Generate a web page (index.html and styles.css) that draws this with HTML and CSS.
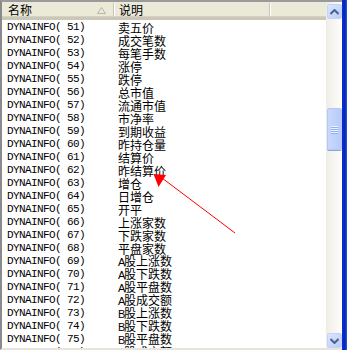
FILE: index.html
```html
<!DOCTYPE html>
<html>
<head>
<meta charset="utf-8">
<link rel="stylesheet" href="styles.css">
</head>
<body>
<div class="frame">
  <div class="panel">
    <div class="list">
      <div class="header">
        <div class="hcell c1"><span>名称</span>
          <svg class="sort" width="9" height="7" viewBox="0 0 9 7"><path d="M4.5 0.5 L8.5 6.5 L0.5 6.5 Z" fill="none" stroke="#b8b5a8" stroke-width="1"/></svg>
        </div>
        <div class="hcell c2"><span>说明</span></div>
        <div class="hcell c3"></div>
      </div>
      <div class="rows">
        <div class="row"><span class="name">DYNAINFO( 51)</span><span class="desc">卖五价</span></div>
        <div class="row"><span class="name">DYNAINFO( 52)</span><span class="desc">成交笔数</span></div>
        <div class="row"><span class="name">DYNAINFO( 53)</span><span class="desc">每笔手数</span></div>
        <div class="row"><span class="name">DYNAINFO( 54)</span><span class="desc">涨停</span></div>
        <div class="row"><span class="name">DYNAINFO( 55)</span><span class="desc">跌停</span></div>
        <div class="row"><span class="name">DYNAINFO( 56)</span><span class="desc">总市值</span></div>
        <div class="row"><span class="name">DYNAINFO( 57)</span><span class="desc">流通市值</span></div>
        <div class="row"><span class="name">DYNAINFO( 58)</span><span class="desc">市净率</span></div>
        <div class="row"><span class="name">DYNAINFO( 59)</span><span class="desc">到期收益</span></div>
        <div class="row"><span class="name">DYNAINFO( 60)</span><span class="desc">昨持仓量</span></div>
        <div class="row"><span class="name">DYNAINFO( 61)</span><span class="desc">结算价</span></div>
        <div class="row"><span class="name">DYNAINFO( 62)</span><span class="desc">昨结算价</span></div>
        <div class="row"><span class="name">DYNAINFO( 63)</span><span class="desc">增仓</span></div>
        <div class="row"><span class="name">DYNAINFO( 64)</span><span class="desc">日增仓</span></div>
        <div class="row"><span class="name">DYNAINFO( 65)</span><span class="desc">开平</span></div>
        <div class="row"><span class="name">DYNAINFO( 66)</span><span class="desc">上涨家数</span></div>
        <div class="row"><span class="name">DYNAINFO( 67)</span><span class="desc">下跌家数</span></div>
        <div class="row"><span class="name">DYNAINFO( 68)</span><span class="desc">平盘家数</span></div>
        <div class="row"><span class="name">DYNAINFO( 69)</span><span class="desc"><span class="lat">A</span>股上涨数</span></div>
        <div class="row"><span class="name">DYNAINFO( 70)</span><span class="desc"><span class="lat">A</span>股下跌数</span></div>
        <div class="row"><span class="name">DYNAINFO( 71)</span><span class="desc"><span class="lat">A</span>股平盘数</span></div>
        <div class="row"><span class="name">DYNAINFO( 72)</span><span class="desc"><span class="lat">A</span>股成交额</span></div>
        <div class="row"><span class="name">DYNAINFO( 73)</span><span class="desc"><span class="lat">B</span>股上涨数</span></div>
        <div class="row"><span class="name">DYNAINFO( 74)</span><span class="desc"><span class="lat">B</span>股下跌数</span></div>
        <div class="row"><span class="name">DYNAINFO( 75)</span><span class="desc"><span class="lat">B</span>股平盘数</span></div>
        <div class="row"><span class="name">DYNAINFO( 76)</span><span class="desc"><span class="lat">B</span>股成交额</span></div>
      </div>
    </div>
    <div class="scroll">
      <div class="sbtn">
        <svg width="9" height="6" viewBox="0 0 9 6"><path d="M0.5 5 L4.5 1 L8.5 5" fill="none" stroke="#4d6185" stroke-width="2"/></svg>
      </div>
      <div class="track">
        <div class="thumb">
          <div class="grip"></div><div class="grip"></div><div class="grip"></div><div class="grip"></div>
        </div>
      </div>
      <div class="sbtn">
        <svg width="9" height="6" viewBox="0 0 9 6"><path d="M0.5 1 L4.5 5 L8.5 1" fill="none" stroke="#4d6185" stroke-width="2"/></svg>
      </div>
    </div>
  </div>
  <div class="blue"></div>
  <svg class="annot" width="347" height="350" viewBox="0 0 347 350">
    <line x1="162" y1="178" x2="235" y2="233" stroke="#ff0000" stroke-width="1"/>
    <path d="M153.5 174 L166 175 L158.5 187 Z" fill="#ff0000"/>
  </svg>
</div>
</body>
</html>
```
FILE: styles.css
```css
html, body {
  margin: 0;
  padding: 0;
  background: #ffffff;
}
.frame {
  position: relative;
  width: 347px;
  height: 350px;
  display: flex;
  overflow: hidden;
}
.panel {
  flex: 1;
  display: flex;
  border-top: 2px solid #9a9a9a;
  border-left: 2px solid #8a8a8a;
  border-bottom: 2px solid #e6e4dc;
  box-sizing: border-box;
  height: 350px;
}
.list {
  flex: 1;
  display: flex;
  flex-direction: column;
  overflow: hidden;
  background: #fff;
}
.header {
  height: 15px;
  flex: none;
  display: flex;
  background: #ebe9d8;
  border-bottom: 3px solid #cbc7b8;
  box-shadow: inset 0 -1px 0 #d6d2c2;
  font-family: "Noto Sans CJK SC", sans-serif;
  font-size: 12px;
  line-height: 15px;
  color: #000;
}
.hcell {
  position: relative;
  box-sizing: border-box;
  display: flex;
  align-items: center;
}
.c1 {
  width: 112px;
  padding-left: 6px;
  border-right: 1px solid #c7c5b2;
  box-shadow: 1px 0 0 #ffffff;
  margin: 1px 0 1px;
}
.c2 {
  width: 156px;
  padding-left: 5px;
  border-right: 1px solid #c7c5b2;
  box-shadow: 1px 0 0 #ffffff;
  margin: 1px 0 1px;
}
.c3 {
  flex: 1;
}
.sort {
  position: absolute;
  left: 95px;
  top: 4px;
}
.rows {
  padding-top: 1px;
}
.row {
  height: 13px;
  display: flex;
  align-items: center;
  white-space: pre;
  color: #000;
}
.name {
  width: 111px;
  padding-left: 5px;
  font-family: "Liberation Mono", monospace;
  font-size: 11px;
  letter-spacing: -0.6px;
  line-height: 13px;
}
.desc {
  font-family: "Noto Sans CJK SC", sans-serif;
  font-size: 12px;
  line-height: 13px;
}
.lat {
  display: inline-block;
  width: 6px;
  font-family: "Liberation Sans", sans-serif;
  font-size: 11px;
}
.scroll {
  width: 16px;
  flex: none;
  display: flex;
  flex-direction: column;
  background: linear-gradient(to right, #eeede5 0%, #f5f4ef 40%, #fdfdfb 100%);
  padding: 2px 0 0 1px;
  box-sizing: border-box;
}
.sbtn {
  height: 15px;
  width: 15px;
  flex: none;
  box-sizing: border-box;
  border: 1px solid #c3d3fd;
  border-radius: 2px;
  background: linear-gradient(to bottom right, #dbe6fe, #b9cdfb);
  display: flex;
  align-items: center;
  justify-content: center;
}
.track {
  flex: 1;
  position: relative;
}
.thumb {
  position: absolute;
  left: 0;
  width: 15px;
  top: 89px;
  height: 42px;
  box-sizing: border-box;
  border: 1px solid #b3c8f5;
  border-radius: 2px;
  background: linear-gradient(to right, #c9d8fc, #b8cbf8);
  box-shadow: 0 1px 0 #8ea4d8;
  display: flex;
  flex-direction: column;
  justify-content: center;
  align-items: center;
  gap: 1px;
}
.grip {
  width: 7px;
  height: 1px;
  background: #eef4fe;
  box-shadow: 0 1px 0 #8cb0f8;
}
.blue {
  width: 5px;
  flex: none;
  background: linear-gradient(to right, #0831d9, #0a24b0 60%, #2a5ee8);
}
.annot {
  position: absolute;
  left: 0;
  top: 0;
  pointer-events: none;
}
```
